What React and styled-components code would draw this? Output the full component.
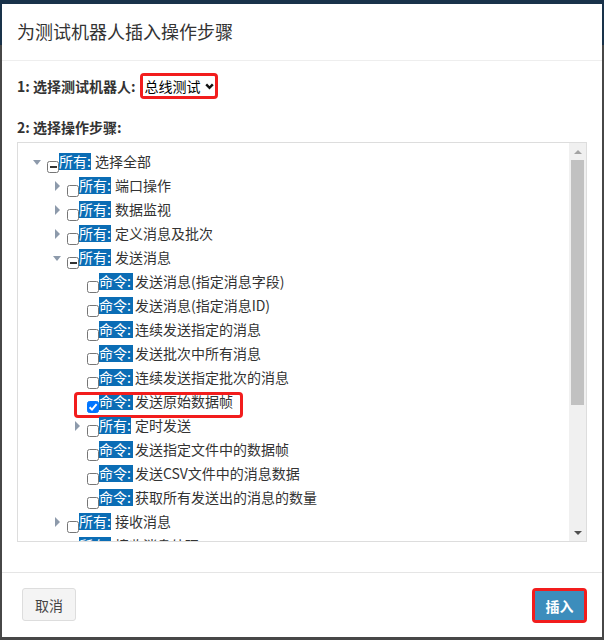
import React from 'react'
import styled, { createGlobalStyle } from 'styled-components'

const GlobalStyle = createGlobalStyle`
  html, body {
    margin: 0;
    padding: 0;
  }
  body {
    background: linear-gradient(#19324a 0, #19324a 45px, #474747 45px);
    font-family: 'Noto Sans CJK SC', 'Noto Sans', sans-serif;
    color: #333;
    width: 604px;
    height: 640px;
    overflow: hidden;
  }
`

const steps = [
  { level: 0, node: 'open', state: 'partial', tag: '所有', text: '选择全部' },
  { level: 1, node: 'closed', tag: '所有', text: '端口操作' },
  { level: 1, node: 'closed', tag: '所有', text: '数据监视' },
  { level: 1, node: 'closed', tag: '所有', text: '定义消息及批次' },
  { level: 1, node: 'open', state: 'partial', tag: '所有', text: '发送消息' },
  { level: 2, tag: '命令', text: '发送消息(指定消息字段)' },
  { level: 2, tag: '命令', text: '发送消息(指定消息ID)' },
  { level: 2, tag: '命令', text: '连续发送指定的消息' },
  { level: 2, tag: '命令', text: '发送批次中所有消息' },
  { level: 2, tag: '命令', text: '连续发送指定批次的消息' },
  { level: 2, tag: '命令', text: '发送原始数据帧', state: 'checked', marked: true },
  { level: 2, node: 'closed', tag: '所有', text: '定时发送' },
  { level: 2, tag: '命令', text: '发送指定文件中的数据帧' },
  { level: 2, tag: '命令', text: '发送CSV文件中的消息数据' },
  { level: 2, tag: '命令', text: '获取所有发送出的消息的数量' },
  { level: 1, node: 'closed', tag: '所有', text: '接收消息' },
  { level: 1, node: 'closed', tag: '所有', text: '接收消息处理' },
  { level: 1, node: 'closed', tag: '所有', text: '诊断服务' },
  { level: 1, node: 'closed', tag: '所有', text: '脚本控制' },
  { level: 1, node: 'closed', tag: '所有', text: '日志记录' },
  { level: 1, node: 'closed', tag: '所有', text: '延时等待' },
  { level: 1, node: 'closed', tag: '所有', text: '结果判定' },
  { level: 1, node: 'closed', tag: '所有', text: '系统操作' },
]

export default function App() {
  return (
    <>
      <GlobalStyle />
      <Modal>
        <Header>
          <Title>为测试机器人插入操作步骤</Title>
        </Header>
        <Body>
          <RobotRow>
            <Label>1: 选择测试机器人:</Label>
            <Marked $select>
              <Select defaultValue="bus">
                <option value="bus">总线测试</option>
              </Select>
              <svg width="9" height="7" viewBox="0 0 9 7">
                <path d="M1.2 1.4 L4.5 4.8 L7.8 1.4" fill="none" stroke="#111" strokeWidth="2.4" />
              </svg>
            </Marked>
          </RobotRow>
          <StepLabel>2: 选择操作步骤:</StepLabel>
          <TreeBox>
            <TreeScroll>
              {steps.map((s, i) => (
                <Row key={i} $level={s.level}>
                  <Switcher>{s.node && <Caret $open={s.node === 'open'} />}</Switcher>
                  <Check $state={s.state || 'empty'}>
                    {s.state === 'checked' && (
                      <svg width="10" height="10" viewBox="0 0 10 10">
                        <path d="M1.6 5.2 L4 7.6 L8.6 2.2" fill="none" stroke="#fff" strokeWidth="2" />
                      </svg>
                    )}
                  </Check>
                  <Tag $cmd={s.tag === '命令'}>{s.tag}:</Tag>
                  <Text $cmd={s.tag === '命令'}>{s.text}</Text>
                  {s.marked && <RowMark />}
                </Row>
              ))}
            </TreeScroll>
            <ScrollBar>
              <ScrollButton>
                <Arrow $up />
              </ScrollButton>
              <Track>
                <Thumb />
              </Track>
              <ScrollButton>
                <Arrow />
              </ScrollButton>
            </ScrollBar>
          </TreeBox>
        </Body>
        <Footer>
          <CancelButton>取消</CancelButton>
          <Marked>
            <InsertButton>插入</InsertButton>
          </Marked>
        </Footer>
      </Modal>
    </>
  )
}

const Modal = styled.div`
  margin: 4px 2px 0 2px;
  width: 600px;
  height: 633px;
  background: #fff;
  display: flex;
  flex-direction: column;
`

const Header = styled.div`
  padding: 14px 15px 16px;
  border-bottom: 1px solid #eee;
`

const Title = styled.h4`
  margin: 0;
  font-size: 18px;
  line-height: 26px;
  font-weight: 400;
  color: #333;
`

const Body = styled.div`
  padding: 12px 15px 30px;
  display: flex;
  flex-direction: column;
`

const RobotRow = styled.div`
  display: flex;
  align-items: center;
  height: 26px;
`

const Label = styled.label`
  font-size: 14px;
  font-weight: 700;
  line-height: 20px;
  color: #333;
  margin-right: 4px;
`

const StepLabel = styled(Label)`
  margin-top: 18px;
  margin-bottom: 5px;
`

const Marked = styled.div`
  display: inline-flex;
  align-items: center;
  box-sizing: border-box;
  border: 3px solid #f21d1d;
  border-radius: 4px;
  height: ${p => (p.$select ? '26px' : '35px')};
  background: #fff;
  padding-right: ${p => (p.$select ? '1px' : '0')};
  svg {
    margin-left: 4px;
  }
`

const Select = styled.select`
  appearance: none;
  border: none;
  outline: none;
  background: #fff;
  font-family: 'Noto Sans CJK SC', sans-serif;
  font-size: 14px;
  color: #000;
  padding: 0 0 0 2px;
  margin: 0;
  height: 20px;
  line-height: 20px;
`

const TreeBox = styled.div`
  display: flex;
  height: 400px;
  box-sizing: border-box;
  border: 1px solid #ddd;
`

const TreeScroll = styled.div`
  flex: 1;
  overflow-y: auto;
  overflow-x: hidden;
  scrollbar-width: none;
  padding-top: 6px;
`

const Row = styled.div`
  position: relative;
  display: flex;
  align-items: flex-start;
  height: 24px;
  padding-left: ${p => 15 + p.$level * 20}px;
  white-space: nowrap;
`

const Switcher = styled.span`
  width: 14px;
  height: 24px;
  flex: none;
`

const Caret = styled.span`
  display: block;
  width: 0;
  height: 0;
  ${p =>
    p.$open
      ? `
    margin-top: 11px;
    border-top: 5px solid #8d9aab;
    border-left: 4.5px solid transparent;
    border-right: 4.5px solid transparent;
  `
      : `
    margin: 8px 0 0 2px;
    border-left: 5px solid #8d9aab;
    border-top: 5px solid transparent;
    border-bottom: 5px solid transparent;
  `}
`

const Check = styled.span`
  flex: none;
  box-sizing: border-box;
  width: 12px;
  height: 12px;
  margin-top: 12px;
  border-radius: 2.5px;
  display: flex;
  align-items: center;
  justify-content: center;
  border: 1px solid ${p => (p.$state === 'checked' ? '#0075ff' : '#767676')};
  background: ${p => (p.$state === 'checked' ? '#0075ff' : '#fff')};
  &::after {
    content: '';
    display: ${p => (p.$state === 'partial' ? 'block' : 'none')};
    width: 7px;
    height: 2px;
    background: #333;
  }
`

const Tag = styled.span`
  display: inline-block;
  margin-top: 4px;
  height: 17px;
  line-height: 17px;
  font-size: 14px;
  color: #fff;
  background: #0b6db5;
  padding-right: ${p => (p.$cmd ? '2px' : '0')};
`

const Text = styled.span`
  margin-top: 4px;
  line-height: 17px;
  font-size: 14px;
  color: #333;
  margin-left: ${p => (p.$cmd ? '2px' : '4px')};
`

const RowMark = styled.span`
  position: absolute;
  left: 56px;
  top: 3px;
  width: 169px;
  height: 26px;
  box-sizing: border-box;
  border: 3px solid #f21d1d;
  border-radius: 4px;
  pointer-events: none;
`

const ScrollBar = styled.div`
  width: 17px;
  flex: none;
  display: flex;
  flex-direction: column;
  background: #f0f0f0;
`

const ScrollButton = styled.div`
  height: 17px;
  display: flex;
  align-items: center;
  justify-content: center;
`

const Arrow = styled.span`
  width: 0;
  height: 0;
  border-left: 4px solid transparent;
  border-right: 4px solid transparent;
  ${p =>
    p.$up
      ? 'border-bottom: 4px solid #a3a3a3;'
      : 'border-top: 4px solid #505050;'}
`

const Track = styled.div`
  flex: 1;
  padding: 0 2px;
`

const Thumb = styled.div`
  height: 245px;
  background: #c1c1c1;
`

const Footer = styled.div`
  border-top: 1px solid #e5e5e5;
  padding: 15px 15px 14px;
  display: flex;
  justify-content: space-between;
  align-items: flex-start;
`

const Button = styled.button`
  font-family: 'Noto Sans CJK SC', sans-serif;
  font-size: 14px;
  border-radius: 3px;
  cursor: pointer;
`

const CancelButton = styled(Button)`
  margin-left: 5px;
  height: 33px;
  padding: 0 12px;
  background: #f4f4f4;
  border: 1px solid #ddd;
  color: #444;
`

const InsertButton = styled(Button)`
  width: 49px;
  height: 29px;
  padding: 0;
  border: none;
  border-radius: 0;
  background: #3c8dbc;
  color: #fff;
  font-weight: 700;
`
